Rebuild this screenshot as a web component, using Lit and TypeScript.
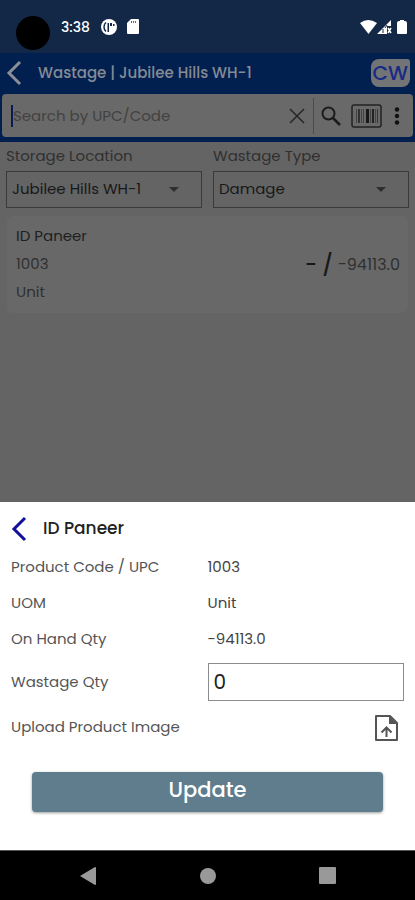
import { LitElement, html, css, svg } from "lit";
import { customElement, state } from "lit/decorators.js";

const chevron = (color: string, size: number) => html`
  <svg width=${size} height="26" viewBox="0 0 16 26" fill="none" aria-hidden="true">
    <path d="M14 2 L3 13 L14 24" stroke=${color} stroke-width="3" />
  </svg>
`;

const bars = [
  [5, 1, "#444"], [7, 2, "#333"], [10, 1, "#444"], [12, 1, "#444"], [15, 3, "#181818"],
  [19, 1, "#444"], [21, 2, "#222"], [24, 1, "#444"], [26, 1, "#333"],
].map(([x, w, fill]) => svg`<rect x=${x} y="5" width=${w} height="14" fill=${fill} />`);

@customElement("app-root")
export class AppRoot extends LitElement {
  @state() private qty = "0";

  static styles = css`
    :host {
      display: flex;
      flex-direction: column;
      min-height: 100vh;
      background: #646464;
      color: #262626;
      font-family: Poppins, Inter, "Liberation Sans", sans-serif;
      font-size: 15px;
      line-height: 24px;
    }
    * { box-sizing: border-box; }
    svg { display: block; flex: none; }
    button, input, select { font: inherit; color: inherit; margin: 0; }
    button { display: flex; border: 0; background: none; padding: 0; cursor: pointer; }
    .status {
      display: flex;
      align-items: center;
      height: 53px;
      padding: 0 7px 0 16px;
      background: #122846;
      color: #fff;
    }
    .camera { width: 34px; height: 34px; border-radius: 50%; background: #000; margin-top: 12px; }
    .clock { margin-left: 11px; font-size: 14px; font-weight: 500; }
    .disc { margin-left: 11px; }
    .card-icon { margin-left: 10px; }
    .wifi { margin-left: auto; }
    .header { background: #02204f; padding: 0 2px 5px; }
    .bar { display: flex; align-items: center; height: 41px; padding: 0 3px 2px 4px; }
    .title { flex: 1; margin: 0 0 0 16px; font-size: 15px; font-weight: 500; color: #858a94; }
    .logo {
      padding: 0 2px;
      border-radius: 8px 3px 8px 8px;
      background: #737475;
      color: #172a86;
      font-size: 20px;
      line-height: 28px;
      font-weight: 500;
    }
    .search {
      display: flex;
      align-items: center;
      height: 43px;
      padding: 0 7px 0 9px;
      border-radius: 4px;
      background: #696969;
    }
    .search input {
      flex: 1;
      min-width: 0;
      height: 22px;
      padding: 0;
      border: 0;
      border-left: 2px solid #0b1a55;
      background: none;
      outline: none;
    }
    .search input::placeholder { color: #424242; opacity: 1; }
    .divider { width: 1px; height: 36px; margin: 0 7px 0 8px; background: #4b4b4b; }
    .scan { margin: 0 6px 0 10px; }
    .filters { display: grid; grid-template-columns: 1fr 1fr; gap: 11px; padding: 2px 6px 0; }
    .filters label { display: block; color: #303030; height: 27px; }
    .pick { display: grid; align-items: center; }
    .pick select, .pick svg { grid-area: 1 / 1; }
    .pick select {
      appearance: none;
      width: 100%;
      height: 37px;
      padding: 0 40px 2px 5px;
      border: 1px solid #3a3a3a;
      border-radius: 0;
      background: none;
      color: #181818;
    }
    .pick svg { justify-self: end; margin-right: 22px; pointer-events: none; }
    .item {
      display: flex;
      align-items: center;
      justify-content: space-between;
      margin: 8px 7px;
      padding: 6px 8px 7px 9px;
      border-radius: 6px;
      background: #686868;
      line-height: 28px;
    }
    .item p { margin: 0; color: #303030; }
    .item .name { color: #202020; }
    .item .amount { display: flex; align-items: center; gap: 5px; padding-top: 2px; font-size: 16px; }
    .amount b { font-size: 21px; font-weight: 500; color: #181818; }
    .sheet { margin-top: auto; padding: 13px 11px 38px; background: #fff; color: #444; }
    .sheet header { display: flex; align-items: center; gap: 16px; height: 28px; }
    .sheet h2 { margin: 0; padding-bottom: 2px; font-size: 17px; font-weight: 500; color: #222; }
    .rows { margin: 6px 0 0; }
    .row { display: grid; grid-template-columns: 1fr 1fr; align-items: center; min-height: 36px; }
    .row dt, .row dd { margin: 0; }
    .row dt { color: #555; }
    .row.field { min-height: 50px; }
    .row.upload { min-height: 40px; }
    .field input {
      display: block;
      width: 100%;
      height: 38px;
      padding: 0 5px;
      border: 1px solid #8c8c8c;
      border-radius: 0;
      outline: none;
      font-size: 20px;
      color: #222;
    }
    .upload button { margin: 2px 5px 0 auto; }
    .update {
      display: block;
      width: calc(100% - 42px);
      height: 40px;
      margin: 25px auto 0;
      padding-bottom: 5px;
      border-radius: 4px;
      background: #5f7d8c;
      box-shadow: 0 1px 3px #0006;
      color: #fff;
      font-size: 21px;
      font-weight: 500;
    }
    .nav {
      display: flex;
      align-items: center;
      justify-content: center;
      height: 50px;
      border-top: 1px solid #555;
      background: #000;
    }
    .nav button { width: 120px; justify-content: center; }
  `;

  private select(id: string, label: string, value: string) {
    return html`
      <div>
        <label for=${id}>${label}</label>
        <div class="pick">
          <select id=${id}><option>${value}</option></select>
          <svg width="12" height="6" viewBox="0 0 12 6" aria-hidden="true"><path d="M1 0H11L6 5Z" fill="#2e2e2e" /></svg>
        </div>
      </div>
    `;
  }

  render() {
    return html`
      <div class="status">
        <span class="camera"></span>
        <span class="clock">3:38</span>
        <svg class="disc" width="16" height="16" viewBox="0 0 16 16" aria-hidden="true">
          <circle cx="8" cy="8" r="8" fill="#fff" />
          <path d="M5 3.500Q3 5 3 8t2 4.500" fill="none" stroke="#122846" stroke-width="1.500" />
          <path d="M6.500 4h1.500v9h-1.500z M9 4h2v3h-2z M12 5h1.500v2h-1.500z" fill="#122846" />
        </svg>
        <svg class="card-icon" width="12" height="15" viewBox="0 0 12 15" aria-hidden="true">
          <path d="M4 0H11Q12 0 12 1V14Q12 15 11 15H1Q0 15 0 14V4Z" fill="#fff" />
          <path d="M4.500 2v2M6.500 2v2M8.500 2v2" stroke="#667" />
        </svg>
        <svg class="wifi" width="48" height="16" viewBox="0 0 48 16" aria-hidden="true">
          <path d="M0 4Q8 -2 17 4L8.500 15Z" fill="#fff" />
          <path d="M17 15L31 1V7H27V15Z" fill="#fff" />
          <path d="M23 10v4M27 6l-2 3" stroke="#122846" />
          <path d="M28 9l3 5M31 9l-3 5" stroke="#fff" stroke-width="1.500" />
          <path d="M40 1h4v1h1q2 0 2 2v10q0 1-1 1h-8q-1 0-1-1V4q0-2 2-2h1Z" fill="#fff" />
        </svg>
      </div>

      <div class="header">
        <div class="bar">
          <button aria-label="Back">${chevron("#8b8f98", 16)}</button>
          <h1 class="title">Wastage | Jubilee Hills WH-1</h1>
          <span class="logo">CW</span>
        </div>
        <div class="search" role="search">
          <input aria-label="Search" placeholder="Search by UPC/Code" />
          <button aria-label="Clear">
            <svg width="16" height="16" viewBox="0 0 16 16"><path d="M1 1L15 15M15 1L1 15" stroke="#262626" stroke-width="1.500" /></svg>
          </button>
          <span class="divider"></span>
          <button aria-label="Search">
            <svg width="20" height="20" viewBox="0 0 20 20" fill="none" stroke="#1c1c1c">
              <circle cx="7.500" cy="7.500" r="6" stroke-width="2" /><path d="M12 12L19 19" stroke-width="2.500" />
            </svg>
          </button>
          <button class="scan" aria-label="Scan barcode">
            <svg width="31" height="24" viewBox="0 0 31 24">
              <rect x="1" y="1" width="29" height="22" rx="2" fill="none" stroke="#222" stroke-width="1.500" />${bars}
            </svg>
          </button>
          <button aria-label="More">
            <svg width="18" height="18" viewBox="0 0 18 18" fill="#111">
              <circle cx="9" cy="2.500" r="2.200" /><circle cx="9" cy="9" r="2.200" /><circle cx="9" cy="15.500" r="2.200" />
            </svg>
          </button>
        </div>
      </div>

      <div class="filters">
        ${this.select("location", "Storage Location", "Jubilee Hills WH-1")}
        ${this.select("type", "Wastage Type", "Damage")}
      </div>
      <article class="item">
        <div>
          <p class="name">ID Paneer</p>
          <p>1003</p>
          <p>Unit</p>
        </div>
        <p class="amount"><b>-</b><b>/</b><span>-94113.0</span></p>
      </article>

      <section class="sheet">
        <header>
          <button aria-label="Close">${chevron("#10109c", 16)}</button>
          <h2>ID Paneer</h2>
        </header>
        <dl class="rows">
          <div class="row"><dt>Product Code / UPC</dt><dd>1003</dd></div>
          <div class="row"><dt>UOM</dt><dd>Unit</dd></div>
          <div class="row"><dt>On Hand Qty</dt><dd>-94113.0</dd></div>
          <div class="row field">
            <dt><label for="qty">Wastage Qty</label></dt>
            <dd>
              <input id="qty" inputmode="decimal" .value=${this.qty}
                @input=${(e: Event) => (this.qty = (e.target as HTMLInputElement).value)} />
            </dd>
          </div>
          <div class="row upload">
            <dt>Upload Product Image</dt>
            <dd>
              <button aria-label="Upload Product Image">
                <svg width="25" height="28" viewBox="0 0 25 28" fill="none" stroke="#555" stroke-width="2">
                  <path d="M2 2H16L23 9V26H2Z" stroke-linejoin="round" />
                  <path d="M15 2V10H23Z" fill="#555" stroke="none" />
                  <path d="M12.500 23V14M7.500 18.500L12.500 13.500L17.500 18.500" />
                </svg>
              </button>
            </dd>
          </div>
        </dl>
        <button class="update">Update</button>
      </section>

      <nav class="nav">
        <button aria-label="Back"><svg width="16" height="18" viewBox="0 0 16 18"><path d="M0 9L15 0Q16 0 16 1V17Q16 18 15 18Z" fill="#999" /></svg></button>
        <button aria-label="Home"><svg width="16" height="16" viewBox="0 0 16 16"><circle cx="8" cy="8" r="8" fill="#999" /></svg></button>
        <button aria-label="Recent apps"><svg width="17" height="17" viewBox="0 0 17 17"><rect width="17" height="17" rx="1" fill="#999" /></svg></button>
      </nav>
    `;
  }
}
